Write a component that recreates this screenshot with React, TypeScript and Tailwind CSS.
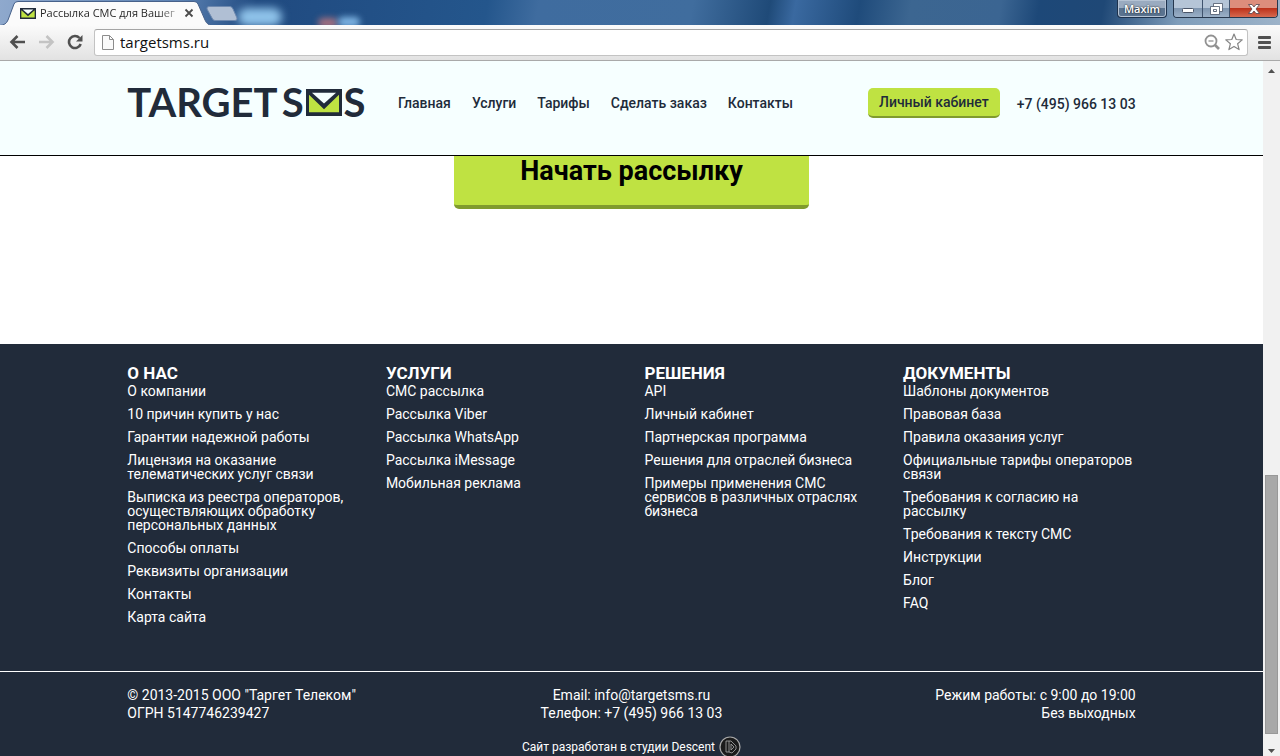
import type { ReactNode } from "react";

const navLinks = ["Главная", "Услуги", "Тарифы", "Сделать заказ", "Контакты"];

const footerColumns = [
  {
    title: "О НАС",
    links: [
      "О компании",
      "10 причин купить у нас",
      "Гарантии надежной работы",
      "Лицензия на оказание телематических услуг связи",
      "Выписка из реестра операторов, осуществляющих обработку персональных данных",
      "Способы оплаты",
      "Реквизиты организации",
      "Контакты",
      "Карта сайта",
    ],
  },
  {
    title: "УСЛУГИ",
    links: [
      "СМС рассылка",
      "Рассылка Viber",
      "Рассылка WhatsApp",
      "Рассылка iMessage",
      "Мобильная реклама",
    ],
  },
  {
    title: "РЕШЕНИЯ",
    links: [
      "API",
      "Личный кабинет",
      "Партнерская программа",
      "Решения для отраслей бизнеса",
      "Примеры применения СМС сервисов в различных отраслях бизнеса",
    ],
  },
  {
    title: "ДОКУМЕНТЫ",
    links: [
      "Шаблоны документов",
      "Правовая база",
      "Правила оказания услуг",
      "Официальные тарифы операторов связи",
      "Требования к согласию на рассылку",
      "Требования к тексту СМС",
      "Инструкции",
      "Блог",
      "FAQ",
    ],
  },
];

function Envelope({ className }: { className: string }) {
  return (
    <svg viewBox="0 0 36 28" className={className} preserveAspectRatio="none" aria-hidden="true">
      <rect width="36" height="28" fill="#212b3a" />
      <path d="M3 6v18h30V6L18 21z" fill="#bfe242" />
      <path d="M6 4h24L18 15z" fill="#f6ffff" />
    </svg>
  );
}

function WindowButton({ label, className, children }: { label: string; className: string; children: ReactNode }) {
  return (
    <button aria-label={label} className={`flex h-[17px] items-center justify-center ${className}`}>
      {children}
    </button>
  );
}

function TitleBar() {
  return (
    <div className="relative flex h-[25px] shrink-0 items-start overflow-hidden bg-[linear-gradient(100deg,#8fa9cd_0%,#5c82b3_14%,#204a80_20%,#24568c_38%,#3f6c9f_42%,#406d9e_54%,#1f4a78_60%,#3a69a0_62%,#1f4b7b_67%,#3c6691_71%,#3b6592_78%,#1d4878_81%,#1f4876_86%,#7f9dba_92%,#9db3c9_100%)]">
      <span className="absolute left-[238px] top-[8px] h-[18px] w-[44px] rounded-full bg-[#8fc3ea] blur-[4px]" />
      <span className="absolute left-[318px] top-[18px] h-[10px] w-[20px] rounded-full bg-[#a5707f] blur-[3px]" />
      <span className="absolute left-[338px] top-[17px] h-[10px] w-[22px] rounded-full bg-[#7fb5e4] blur-[3px]" />
      <div className="relative flex h-[25px] w-[214px] items-center pl-5 pr-[19px]">
        <svg viewBox="0 0 214 25" className="absolute inset-0 h-full w-full" aria-hidden="true">
          <path
            d="M0 25.5Q6 25 8 20L14 4Q15 1.500 18 1.500H194Q197 1.500 198 4L205 20Q207 25 212 25.500Z"
            fill="#fbfbfb"
            stroke="#47618a"
            strokeWidth="1"
          />
        </svg>
        <Envelope className="relative mt-px h-[11px] w-[16px]" />
        <span className="relative ml-1 mt-px w-[140px] whitespace-nowrap bg-[linear-gradient(90deg,#222_84%,#ccc)] bg-clip-text font-['Open_Sans','Noto_Sans',sans-serif] text-[11px] leading-[18px] text-transparent">
          Рассылка СМС для Вашег
        </span>
        <button aria-label="Закрыть вкладку" className="relative ml-1 mt-px">
          <svg viewBox="0 0 10 10" className="h-[10px] w-[10px]" stroke="#4b4b4b" strokeWidth="1.800">
            <path d="M1.500 1.500l7 7M8.500 1.500l-7 7" />
          </svg>
        </button>
      </div>
      <button aria-label="Новая вкладка" className="relative -ml-[8px] mt-[6px]">
        <svg viewBox="0 0 32 15" className="h-[15px] w-[32px]">
          <path d="M3 .5H24Q26 .5 27 3L31 12Q31.500 14.500 29 14.500H9Q7 14.500 6 12L1 3Q.5 .5 3 .5Z" fill="#b0bfd4" stroke="#6d88ae" />
        </svg>
      </button>
      <div className="relative ml-auto flex items-start pr-[2px] font-['Open_Sans','Noto_Sans',sans-serif]">
        <button className="mr-[6px] h-[18px] w-[50px] rounded-b-[4px] border border-t-0 border-[#1d324d] bg-[linear-gradient(#9aabc0_50%,#5a738f_50%)] text-[11px] font-semibold leading-[17px] text-white shadow-[inset_0_0_0_1px_#b5c3d4] [text-shadow:0_0_2px_#000]">
          Maxim
        </button>
        <div className="flex h-[18px] overflow-hidden rounded-b-[4px] border border-t-0 border-[#27384e]">
          <WindowButton label="Свернуть" className="w-[29px] border-r border-[#40546e] bg-[linear-gradient(#b5c5d7_45%,#7f96b0_50%,#9bb0c7)]">
            <svg viewBox="0 0 12 5" className="mt-1 h-[5px] w-[12px]">
              <rect x=".5" y=".5" width="11" height="4" rx="1" fill="#fff" stroke="#4a5568" />
            </svg>
          </WindowButton>
          <WindowButton label="Свернуть в окно" className="w-[27px] border-r border-[#40546e] bg-[linear-gradient(#b5c5d7_45%,#7f96b0_50%,#9bb0c7)]">
            <svg viewBox="0 0 13 12" className="h-[12px] w-[13px]" fillRule="evenodd" fill="#fff" stroke="#4a5568" strokeWidth=".8">
              <path d="M3.500.5h9v8h-9z" />
              <path d="M.5 3.500h9v8h-9zM3.500 6.500v2h3v-2z" />
            </svg>
          </WindowButton>
          <WindowButton label="Закрыть" className="w-[47px] bg-[linear-gradient(#dd8d7c_45%,#bd321b_50%,#d6694f)]">
            <svg viewBox="0 0 12 10" className="h-[10px] w-[12px]">
              <path d="M.5.500H4L6 3 8 .5h3.500L8 5l3.500 4.500H8L6 7 4 9.500H.5L4 5z" fill="#fff" stroke="#53434b" strokeWidth=".8" />
            </svg>
          </WindowButton>
        </div>
      </div>
    </div>
  );
}

function Toolbar() {
  return (
    <div className="flex h-9 shrink-0 items-center border-b border-[#a9a9a9] bg-[linear-gradient(#fbfbfb,#e2e2e2)] pb-px pl-[9px] pr-[9px]">
      <button aria-label="Назад">
        <svg viewBox="0 0 16 14" className="h-[14px] w-[16px]" fill="none" stroke="#505050" strokeWidth="2.600">
          <path d="M16 7H3M8.500 1L2.500 7l6 6" />
        </svg>
      </button>
      <button aria-label="Вперёд" className="ml-[14px]">
        <svg viewBox="0 0 16 14" className="h-[14px] w-[16px]" fill="none" stroke="#c3c3c3" strokeWidth="2.600">
          <path d="M0 7h13M7.500 1l6 6-6 6" />
        </svg>
      </button>
      <button aria-label="Обновить" className="ml-[12px]">
        <svg viewBox="0 0 16 16" className="h-[16px] w-[16px]">
          <path d="M12.500 4A6 6 0 1 0 13.700 10" fill="none" stroke="#505050" strokeWidth="2.600" />
          <path d="M15.500 1v6.500H9z" fill="#505050" />
        </svg>
      </button>
      <div className="ml-[11px] flex h-[27px] flex-1 items-center rounded-[3px] border border-[#c3c3c3] border-t-[#a5a5a5] bg-white pl-[7px] pr-[4px]">
        <svg viewBox="0 0 12 15" className="h-[15px] w-[12px]" fill="#fafafa" stroke="#8c8c8c">
          <path d="M.5.500h7l4 4v10H.5zM7.500.500v4h4" />
        </svg>
        <input
          aria-label="Адрес"
          defaultValue="targetsms.ru"
          className="ml-[6px] min-w-0 flex-1 bg-transparent font-['Open_Sans','Noto_Sans',sans-serif] text-[15px] leading-5 text-[#111] outline-none"
        />
        <button aria-label="Масштаб">
          <svg viewBox="0 0 16 16" className="h-[16px] w-[16px]" fill="none" stroke="#919191">
            <circle cx="7" cy="7" r="5.500" strokeWidth="1.800" />
            <path d="M4.500 7h5" strokeWidth="1.300" />
            <path d="M11 11l4 4" strokeWidth="2.600" />
          </svg>
        </button>
        <button aria-label="Добавить в закладки" className="ml-[5px]">
          <svg viewBox="0 0 18 18" className="h-[18px] w-[18px]" fill="#fff" stroke="#858585" strokeWidth="1.200" strokeLinejoin="round">
            <path d="M9 1l2.200 5.500 6 .4-4.600 3.800 1.500 5.900L9 13.400l-5.100 3.200 1.500-5.900L.8 6.900l6-.4z" />
          </svg>
        </button>
      </div>
      <button aria-label="Меню" className="ml-[10px] flex flex-col gap-[2px]">
        <span className="h-[3px] w-[13px] rounded-[1px] bg-[#505050]" />
        <span className="h-[3px] w-[13px] rounded-[1px] bg-[#505050]" />
        <span className="h-[3px] w-[13px] rounded-[1px] bg-[#505050]" />
      </button>
    </div>
  );
}

function Logo() {
  return (
    <a href="#" aria-label="TARGETSMS" className="flex items-center font-['Lato',sans-serif] text-[40px] font-bold leading-[28px] text-[#212b3a]">
      <span>TARGET</span>
      <span className="ml-1">S</span>
      <Envelope className="mx-[2px] mt-px h-[27px] w-[36px]" />
      <span>S</span>
    </a>
  );
}

function Header() {
  return (
    <header className="h-[95px] shrink-0 border-b border-black bg-[#f6ffff] pt-[27px] text-[#212b3a]">
      <div className="mx-auto flex w-4/5 items-start px-px">
        <Logo />
        <nav className="ml-auto flex gap-[21px] text-[14px] font-medium leading-[30px]">
          {navLinks.map((link) => (
            <a key={link} href="#" className="whitespace-nowrap">
              {link}
            </a>
          ))}
        </nav>
        <div className="ml-[75px] flex items-start gap-[17px] whitespace-nowrap text-[14px] font-medium">
          <button className="h-[30px] rounded-[5px] border-b-2 border-[#809b2e] bg-[#bfe242] px-[11px] leading-7">
            Личный кабинет
          </button>
          <a href="tel:+74959661303" className="leading-8">
            +7 (495) 966 13 03
          </a>
        </div>
      </div>
    </header>
  );
}

function DescentMark() {
  return (
    <svg viewBox="0 0 22 22" className="h-[22px] w-[22px]" fill="none" aria-hidden="true">
      <circle cx="11" cy="11" r="10" fill="#1b1b1b" stroke="#aaa" strokeWidth="1.200" />
      <path d="M7 5v11h3V5zM10 5h2l5 5v3l-4 4-3-1M12 8v6l3-3z" stroke="#aaa" strokeWidth=".8" />
    </svg>
  );
}

function Footer() {
  return (
    <footer className="flex-1 bg-[#212b3a] text-white">
      <div className="mx-auto grid w-4/5 grid-cols-4 gap-x-[26px] px-px pb-[47px] pt-[19px]">
        {footerColumns.map((column) => (
          <div key={column.title}>
            <h2 className="mb-px text-[17px] font-bold leading-5">{column.title}</h2>
            <ul className="flex flex-col gap-[9px] text-[14px] leading-[14px]">
              {column.links.map((link) => (
                <li key={link}>
                  <a href="#">{link}</a>
                </li>
              ))}
            </ul>
          </div>
        ))}
      </div>
      <div className="border-t border-white pt-[14px]">
        <div className="mx-auto grid w-4/5 grid-cols-3 px-px text-[14px] leading-[18px]">
          <p>
            © 2013-2015 ООО "Таргет Телеком"
            <br />
            ОГРН 5147746239427
          </p>
          <p className="text-center">
            Email: <a href="mailto:info@targetsms.ru">info@targetsms.ru</a>
            <br />
            Телефон: +7 (495) 966 13 03
          </p>
          <p className="text-right">
            Режим работы: с 9:00 до 19:00
            <br />
            Без выходных
          </p>
        </div>
        <a href="#" className="mt-[14px] flex items-center justify-center text-[12px] leading-[22px]">
          Сайт разработан в студии Descent
          <span className="ml-1">
            <DescentMark />
          </span>
        </a>
      </div>
    </footer>
  );
}

function Scrollbar() {
  return (
    <div className="flex w-[17px] shrink-0 flex-col items-center bg-[#f1f1f1]">
      <svg viewBox="0 0 17 17" className="h-[17px] w-[17px]" fill="#505050">
        <path d="M5 12l3.500-4 3.500 4z" />
      </svg>
      <div className="grow-[398]" />
      <div className="w-[13px] grow-[258] border border-[#989898] bg-[#a8a8a8]" />
      <div className="grow-[5]" />
      <svg viewBox="0 0 17 17" className="h-[17px] w-[17px]" fill="#505050">
        <path d="M5 10l3.500 4 3.500-4z" />
      </svg>
    </div>
  );
}

export default function App() {
  return (
    <div className="flex h-screen flex-col overflow-hidden font-['Roboto',sans-serif]">
      <TitleBar />
      <Toolbar />
      <div className="flex min-h-0 flex-1">
        <div className="flex min-w-0 flex-1 flex-col overflow-hidden bg-white">
          <Header />
          <main className="flex shrink-0 justify-center pb-[135px]">
            <button className="rounded-b-[5px] border-b-4 border-[#809b2e] bg-[#bfe242] px-[66px] pb-[19px] text-[27px] font-bold leading-[30px] text-black">
              Начать рассылку
            </button>
          </main>
          <Footer />
        </div>
        <Scrollbar />
      </div>
    </div>
  );
}
